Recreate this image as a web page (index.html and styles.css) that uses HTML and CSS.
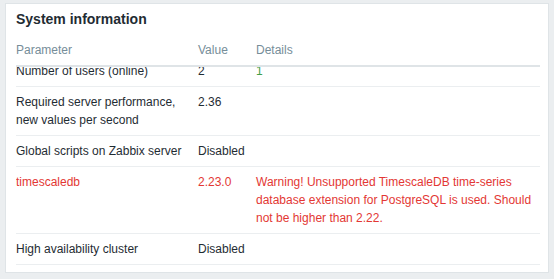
FILE: index.html
```html
<!DOCTYPE html>
<html>
<head>
<meta charset="utf-8">
<link rel="stylesheet" href="styles.css">
</head>
<body>
<section class="widget">
  <h4 class="widget-title">System information</h4>
  <div class="widget-body">
    <table class="list head-table">
      <colgroup><col class="c1"><col class="c2"><col class="c3"></colgroup>
      <thead>
        <tr><th>Parameter</th><th>Value</th><th>Details</th></tr>
      </thead>
    </table>
    <div class="viewport">
      <table class="list rows">
        <colgroup><col class="c1"><col class="c2"><col class="c3"></colgroup>
        <tbody>
          <tr><td>Number of users (online)</td><td>2</td><td class="green">1</td></tr>
          <tr><td>Required server performance, new values per second</td><td>2.36</td><td></td></tr>
          <tr><td>Global scripts on Zabbix server</td><td>Disabled</td><td></td></tr>
          <tr class="red"><td>timescaledb</td><td>2.23.0</td><td>Warning! Unsupported TimescaleDB time-series database extension for PostgreSQL is used. Should not be higher than 2.22.</td></tr>
          <tr><td>High availability cluster</td><td>Disabled</td><td></td></tr>
        </tbody>
      </table>
    </div>
  </div>
</section>
</body>
</html>
```

FILE: styles.css
```css
html, body {
  margin: 0;
  padding: 0;
}
body {
  background: #ebeef0;
  padding: 3px 5px 0;
  font-family: "Liberation Sans", Arial, sans-serif;
  font-size: 12px;
  line-height: 18px;
  color: #1f2c33;
}
.widget {
  box-sizing: border-box;
  height: 270px;
  background: #fff;
  border: 1px solid #dfe4e7;
  padding: 6px 8px 0 10px;
  display: flex;
  flex-direction: column;
}
.widget-title {
  margin: 0 0 7px;
  font-size: 14px;
  font-weight: bold;
  line-height: 18px;
  color: #1f2c33;
}
.widget-body {
  flex: 1;
  display: flex;
  flex-direction: column;
  min-height: 0;
}
.list {
  width: 100%;
  table-layout: fixed;
  border-collapse: collapse;
}
.c1 { width: 182px; }
.c2 { width: 58px; }
.c3 { width: auto; }
.list th, .list td {
  padding: 6px 8px 6px 0;
  text-align: left;
  vertical-align: top;
  font-weight: normal;
}
.list th:last-child, .list td:last-child {
  padding-right: 0;
}
.head-table th {
  color: #768d99;
  border-bottom: 2px solid #dfe4e7;
}
.viewport {
  flex: 1;
  overflow: hidden;
}
.rows {
  margin-top: -11px;
}
.rows td {
  border-bottom: 1px solid #ebeef0;
}
.green { color: #429e47; }
.red td { color: #e33734; }
```
